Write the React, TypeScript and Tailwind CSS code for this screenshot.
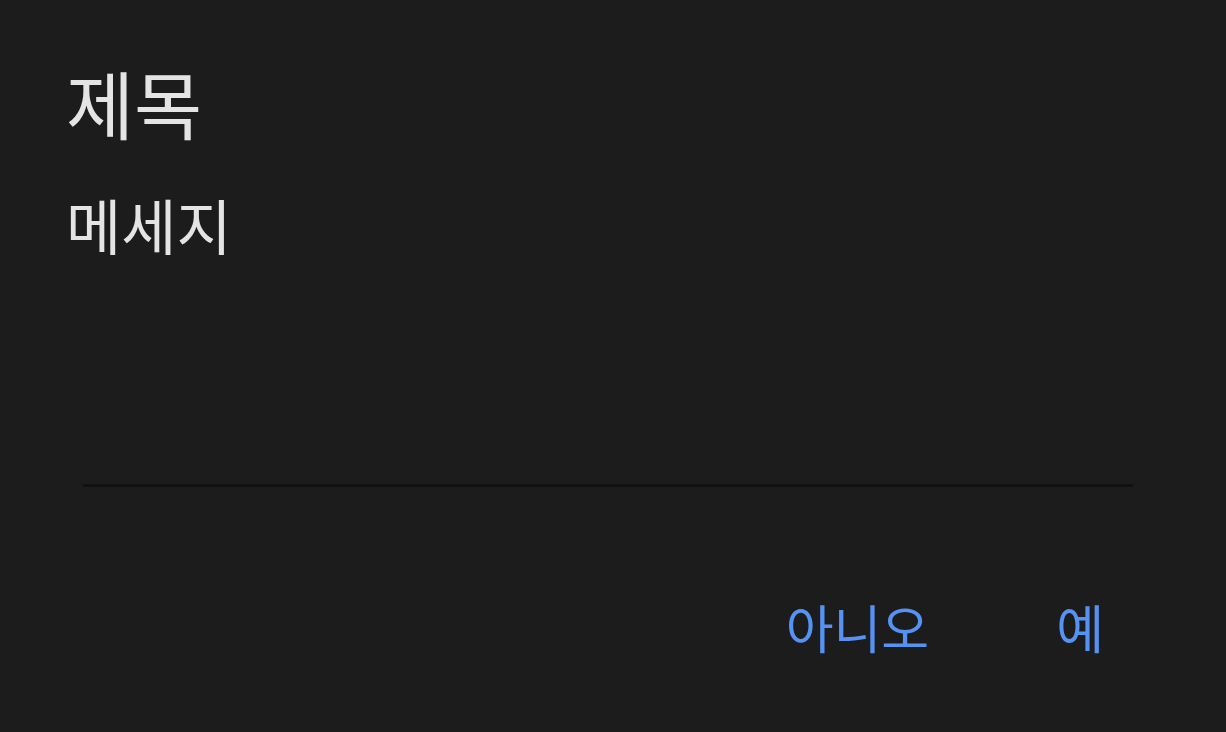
import React from 'react';

export default function App() {
  return (
    <div
      className="w-[1226px] h-[732px] bg-[#1c1c1c] flex flex-col"
      style={{ fontFamily: '"Noto Sans CJK KR", "Noto Sans", sans-serif' }}
    >
      <div className="pl-[66px] pt-[59px]">
        <h1 className="text-[74px] leading-[86px] font-normal text-[#e4e4e4]">제목</h1>
        <p className="mt-[44px] text-[60px] leading-[70px] font-normal text-[#e4e4e4]">메세지</p>
      </div>
      <div className="mt-[225px] ml-[83px] mr-[93px] h-[3px] bg-[#111111]" />
      <div className="flex justify-end items-center gap-[127px] pr-[122px] mt-[110px]">
        <button className="text-[52px] leading-[60px] text-[#5592f4]">아니오</button>
        <button className="text-[52px] leading-[60px] text-[#5592f4]">예</button>
      </div>
    </div>
  );
}
